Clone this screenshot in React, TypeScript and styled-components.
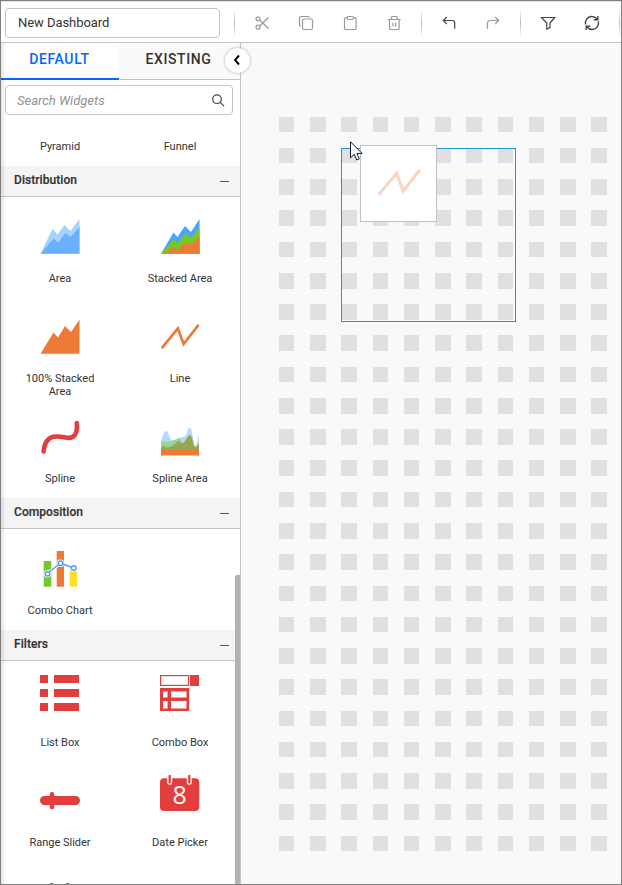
import React from "react";
import styled, { createGlobalStyle, css } from "styled-components";

const GlobalStyle = createGlobalStyle`
  *, *::before, *::after { box-sizing: border-box; }
  body { margin: 0; background: #fff; }
  input, button { font: inherit; }
`;

const Window = styled.div`
  display: flex;
  flex-direction: column;
  width: 622px;
  height: 885px;
  border: 1px solid #808080;
  background: #fff;
  color: #333;
  font-family: Roboto, "Liberation Sans", sans-serif;
  overflow: hidden;
`;

const Toolbar = styled.header`
  display: flex;
  flex: none;
  align-items: center;
  height: 42px;
  padding: 1px 0 0 4px;
  border-top: 1px solid #e4e4e4;
  border-bottom: 1px solid #c4c4c4;
`;

const NameInput = styled.input`
  width: 215px;
  height: 30px;
  margin-right: 14px;
  padding: 0 0 0 12px;
  border: 1px solid #c4c4c4;
  border-radius: 4px;
  outline: none;
  background: #fff;
  color: #333;
  font-size: 13px;
  letter-spacing: -0.05px;
`;

const Divider = styled.span`
  width: 1px;
  height: 28px;
  background: linear-gradient(#fff, #b8b8b8 50%, #fff);
`;

const ToolGroup = styled.div<{ $pad: string }>`
  display: flex;
  gap: 20px;
  padding: ${(p) => p.$pad};
`;

const ToolButton = styled.button<{ $muted?: boolean }>`
  display: flex;
  align-items: center;
  justify-content: center;
  width: 24px;
  height: 24px;
  padding: 0;
  border: 0;
  background: none;
  color: ${(p) => (p.$muted ? "#999" : "#444")};
`;

const Body = styled.div`
  display: flex;
  flex: 1;
  min-height: 0;
`;

const Sidebar = styled.aside`
  position: relative;
  display: flex;
  flex: none;
  flex-direction: column;
  width: 240px;
  border-right: 1px solid #c4c4c4;

  &::before {
    content: "";
    position: absolute;
    z-index: 1;
    inset: 0 auto 0 0;
    width: 5px;
    background: linear-gradient(90deg, rgba(0, 0, 0, 0.1), rgba(0, 0, 0, 0));
  }
`;

const Tabs = styled.div`
  display: flex;
  height: 37px;
`;

const Tab = styled.button<{ $active?: boolean }>`
  flex: none;
  width: ${(p) => (p.$active ? 118 : 121)}px;
  padding: 0 2px 5px 0;
  border: 0;
  border-bottom: 1px solid #c4c4c4;
  background: #fafafa;
  color: #333;
  font-size: 14px;
  font-weight: 500;
  letter-spacing: 0.6px;
  ${(p) =>
    p.$active &&
    css`
      padding: 0 1px 4px 0;
      border-bottom: 2px solid #0565ff;
      background: #fff;
      color: #0565ff;
    `}
`;

const CollapseButton = styled.button`
  position: absolute;
  z-index: 2;
  top: 5px;
  left: 224px;
  display: flex;
  align-items: center;
  justify-content: center;
  width: 25px;
  height: 25px;
  padding: 0 1px 1px 0;
  border: 0;
  border-radius: 50%;
  background: #fff;
  box-shadow: 0 0 3px rgba(0, 0, 0, 0.32);
`;

const Search = styled.label`
  display: flex;
  flex: none;
  align-items: center;
  width: 228px;
  height: 30px;
  margin: 5px 0 5px 4px;
  padding: 0 7px 0 11px;
  border: 1px solid #c4c4c4;
  border-radius: 4px;
`;

const SearchInput = styled.input`
  flex: 1;
  min-width: 0;
  padding: 0;
  border: 0;
  outline: none;
  font-size: 13px;
  &::placeholder { color: #929292; font-style: italic; opacity: 1; }
`;

const WidgetList = styled.div`
  flex: 1;
  min-height: 0;
  overflow: hidden;
`;

const SectionHeader = styled.div`
  display: flex;
  align-items: center;
  justify-content: space-between;
  height: 31px;
  padding: 0 11px 1px 13px;
  border-bottom: 1px solid #c4c4c4;
  background: #f4f4f4;
  font-size: 12px;
  font-weight: 500;
`;

const SectionTitle = styled.span`
  margin-top: -2px;
  letter-spacing: 0.06px;
  -webkit-text-stroke: 0.2px #333;
`;

const Minus = styled.span`
  width: 9px;
  height: 1px;
  margin-top: 2px;
  background: #555;
`;

const WidgetGrid = styled.div<{ $scrolled?: boolean }>`
  display: grid;
  grid-template-columns: 120px 120px;
  grid-auto-rows: 100px;
  padding-bottom: 1px;
  margin-top: ${(p) => (p.$scrolled ? -55 : 0)}px;
`;

const WidgetCell = styled.div`
  display: flex;
  flex-direction: column;
  align-items: center;
  padding-top: 20px;
  padding-right: 2px;
`;

const WidgetIcon = styled.svg`
  display: block;
  flex: none;
  width: 40px;
  height: 40px;
  overflow: visible;
`;

const WidgetLabel = styled.span`
  width: 80px;
  margin-top: 15px;
  font-size: 11px;
  line-height: 13px;
  text-align: center;
`;

const ScrollThumb = styled.div`
  position: absolute;
  z-index: 2;
  top: 532px;
  right: -1px;
  bottom: 0;
  width: 6px;
  border-right: 1px solid #c4c4c4;
  border-radius: 2px 0 0 0;
  background: #b2b2b2;
`;

const Canvas = styled.main`
  position: relative;
  flex: 1;
  min-width: 0;
  background: #f9f9f9;
`;

const TileGrid = styled.div`
  display: grid;
  grid-template-columns: repeat(11, 15.625px);
  grid-auto-rows: 15.625px;
  column-gap: 15.635px;
  row-gap: 15.645px;
  padding: 73.55px 0 0 37.86px;
`;

const Tile = styled.span`
  background: #e0e0e0;
`;

const DropArea = styled.div`
  position: absolute;
  top: 105px;
  left: 100px;
  width: 175px;
  height: 174px;
  border: 1px solid #1c9ad0;
`;

const DragCard = styled.div`
  position: absolute;
  top: 102px;
  left: 119px;
  display: flex;
  align-items: center;
  justify-content: center;
  width: 77px;
  height: 77px;
  padding-bottom: 2px;
  border: 1px solid #c2c2c2;
  background: #fff;
`;

const DragIcon = styled.svg`
  width: 46px;
  height: 46px;
  opacity: 0.3;
`;

const Cursor = styled.svg`
  position: absolute;
  top: 98px;
  left: 109px;
  width: 13px;
  height: 20px;
`;

const ToolSvg = ({ children }: { children: React.ReactNode }) => (
  <svg width="16" height="16" viewBox="0 0 16 16" fill="none" stroke="currentColor" strokeWidth="1.2">
    {children}
  </svg>
);

const linePath = "M2.3 30.3 17.9 11.5 23.6 27 38 8.7";

const icons: Record<string, React.ReactNode> = {
  Area: (
    <>
      <path d="M.5 36.700 12.500 12l5 5.500 7-9.500 6 6 9-12v34.700Z" fill="#a6d2ff" />
      <path d="M.5 36.700 13.500 21.500l4.500 4 7.500-9.500 5 4 9-10v26.700Z" fill="#69b1ff" />
    </>
  ),
  "Stacked Area": (
    <>
      <path d="M1 36.700 13.500 15.500l4 4.500L25 9l6 6 8.500-13v34.700Z" fill="#4aa3ff" />
      <path d="M1 36.700 14 21.500l4 4.500 7-9.500 6 3.500 8.500-9.500v26.200Z" fill="#75c926" />
      <path d="m5 36.700 8-7.200 4.500 4L25 25l5 3 9.500-8.500v17.200Z" fill="#ed7b37" />
    </>
  ),
  "100% Stacked Area": <path d="M.5 36.700 13.500 15.500l4.500 5L25 9l6 6 8.500-12.500v34.200Z" fill="#ed7b37" />,
  Line: <path d={linePath} fill="none" stroke="#ed7b37" strokeWidth="2.7" strokeLinecap="round" />,
  Spline: (
    <path
      d="M3.600 34.500C4.500 24.500 8.500 19.500 16.500 19.500S24 20.900 28.800 20.900 37.800 17.500 36.800 6"
      fill="none"
      stroke="#e23e3e"
      strokeWidth="4.600"
      strokeLinecap="round"
    />
  ),
  "Spline Area": (
    <>
      <path d="M1 26C2.500 18 4 14 6.300 14S10 24 13 24s6-4 9-4 3.500-1 5-4.500S27.500 11 29.500 11 32 15 33 21s1.500 10 3 7 2-7 3-11v16H1Z" fill="#b5d9ff" />
      <path d="M1 24c5 2 11 0 18.500-3 1.500 2 3 5 4.500 5s4.500-8 6-8 3 7 4 11 3-1 5-3v8H1Z" fill="#9bd58c" />
      <path d="M1 31c2-3 4-2 5-1s6 0 9-3 4-4 5-2 3 2 5-1 3.500-6 5-6 3 6 4 10 3 1 5-1v7H1Z" fill="#96a655" />
      <path d="M1 33h38v5.600H1Z" fill="#ed7b37" />
    </>
  ),
  "Combo Chart": (
    <>
      <path d="M3.700 12h7.600v25.700H3.700Z" fill="#75c926" />
      <path d="M16.700 2h7.300v35.700h-7.300Z" fill="#ed7b37" />
      <path d="M29.700 19h7.300v18.700h-7.300Z" fill="#ffdc30" />
      <path d="M7.500 24.500 20.500 14 33.700 19" fill="none" stroke="#fff" strokeWidth="3" />
      {[[7.5, 24.7], [20.5, 14.3], [33.7, 19]].map(([x, y]) => (
        <circle key={x} cx={x} cy={y} r="3.8" fill="#fff" />
      ))}
      <path d="M7.500 24.500 20.500 14 33.700 19" fill="none" stroke="#4e9dff" strokeWidth="1.500" />
      {[[7.5, 24.7], [20.5, 14.3], [33.7, 19]].map(([x, y]) => (
        <circle key={x} cx={x} cy={y} r="2.3" fill="#fff" stroke="#4e9dff" strokeWidth="1.500" />
      ))}
    </>
  ),
  "List Box": (
    <path d="M0 -6h8v8H0Zm14 0h25v8H14ZM0 8h8v8H0Zm14 0h25v8H14ZM0 22h8v8H0Zm14 0h25v8H14Z" fill="#e23e3e" />
  ),
  "Combo Box": (
    <>
      <rect x=".6" y="-5.400" width="28" height="9.800" fill="#fff" stroke="#e23e3e" strokeWidth="1.200" />
      <path d="M30 -6h9v11h-9Z" fill="#e23e3e" />
      <path
        d="M0 7h29.200V30H0Z M3 10.500v6h4.500v-6Zm8 0v6h15.500v-6ZM3 20v7.500h4.500V20Zm8 0v7.500h15.500V20Z"
        fill="#e23e3e"
        fillRule="evenodd"
      />
    </>
  ),
  "Range Slider": (
    <>
      <rect x="0" y="15" width="40" height="9" rx="4.500" fill="#e23e3e" />
      <rect x="9.800" y="11" width="4.400" height="17.200" rx="2.200" fill="#e23e3e" />
    </>
  ),
  "Date Picker": (
    <>
      <rect x="0" y="-2.700" width="39.200" height="32.700" rx="4" fill="#e23e3e" />
      <path d="M9.700-5v6.200M29.300-5v6.200" stroke="#fff" strokeWidth="5" strokeLinecap="round" />
      <path d="M9.700-5v6.500M29.300-5v6.500" stroke="#e23e3e" strokeWidth="2.300" strokeLinecap="round" />
      <text x="19.700" y="23" fill="#fff" fontSize="25" fontFamily="Open Sans" fontWeight="500" textAnchor="middle">8</text>
    </>
  ),
  Partial: <path d="M10 2h3v3h-3Zm16 0h3v3h-3Z" fill="#e23e3e" />,
};

const Widget = ({ name, label = name }: { name: string; label?: string }) => (
  <WidgetCell>
    <WidgetIcon viewBox="0 0 40 40">{icons[name]}</WidgetIcon>
    <WidgetLabel>{label}</WidgetLabel>
  </WidgetCell>
);

const sections = [
  { title: "Distribution", widgets: ["Area", "Stacked Area", "100% Stacked Area", "Line", "Spline", "Spline Area"] },
  { title: "Composition", widgets: ["Combo Chart"] },
  { title: "Filters", widgets: ["List Box", "Combo Box", "Range Slider", "Date Picker"] },
];

export default function App() {
  return (
    <>
      <GlobalStyle />
      <Window>
        <Toolbar>
          <NameInput defaultValue="New Dashboard" aria-label="Dashboard name" />
          <Divider />
          <ToolGroup $pad="0 15px 0 15px">
            <ToolButton $muted aria-label="Cut">
              <ToolSvg>
                <circle cx="4" cy="3.800" r="2" />
                <circle cx="4" cy="12.200" r="2" />
                <path d="m5.600 5 9 8.500M5.600 11l9-8.500" />
              </ToolSvg>
            </ToolButton>
            <ToolButton $muted aria-label="Copy">
              <ToolSvg>
                <rect x="4.500" y="4" width="10" height="10.500" rx="1.500" />
                <path d="M2.800 11.500A1.500 1.500 0 0 1 1.500 10V3A1.500 1.500 0 0 1 3 1.500h7A1.500 1.500 0 0 1 11.500 2.700" />
              </ToolSvg>
            </ToolButton>
            <ToolButton $muted aria-label="Paste">
              <ToolSvg>
                <path d="M5.500 2.700H3.800a1.300 1.300 0 0 0-1.300 1.300v9.200a1.300 1.300 0 0 0 1.300 1.300h9a1.300 1.300 0 0 0 1.300-1.300V4a1.300 1.300 0 0 0-1.300-1.300H11" />
                <rect x="5.300" y="1.500" width="6" height="3" rx="1" />
              </ToolSvg>
            </ToolButton>
            <ToolButton $muted aria-label="Delete">
              <ToolSvg>
                <path d="M1.800 4.500h13M3.500 4.500v8.700a1.300 1.300 0 0 0 1.300 1.300h7a1.300 1.300 0 0 0 1.300-1.300V4.500M5.500 4.300V2.500a1 1 0 0 1 1-1h3.600a1 1 0 0 1 1 1v1.800M7 7.500v4M9.700 7.500v4" />
              </ToolSvg>
            </ToolButton>
          </ToolGroup>
          <Divider />
          <ToolGroup $pad="0 15px 0 15px">
            <ToolButton aria-label="Undo">
              <ToolSvg>
                <path d="M5.800 2 2.300 5.500 5.800 9M2.500 5.500h8.700a2.500 2.500 0 0 1 2.500 2.500v5.800" />
              </ToolSvg>
            </ToolButton>
            <ToolButton $muted aria-label="Redo">
              <ToolSvg>
                <path d="m10.200 2 3.500 3.500L10.200 9M13.500 5.500H5A2.500 2.500 0 0 0 2.500 8v5.800" />
              </ToolSvg>
            </ToolButton>
          </ToolGroup>
          <Divider />
          <ToolGroup $pad="0 15px 0 15px">
            <ToolButton aria-label="Filter">
              <ToolSvg>
                <path d="M1.500 2.500h13.200L10 8v4.500l-3.300 1.500V8Z" />
              </ToolSvg>
            </ToolButton>
            <ToolButton aria-label="Refresh">
              <ToolSvg>
                <path
                  d="M1.600 9.500C.8 5.500 3.200 1.800 7.500 1.500c2.500-.1 4.300.9 5.500 2.500M14.400 6.500c.8 4-1.600 7.700-5.900 8C6 14.600 4.200 13.600 3 12M13.800 1v3.800h-4M2.200 15v-3.800h4"
                  strokeWidth="1.400"
                />
              </ToolSvg>
            </ToolButton>
          </ToolGroup>
          <Divider />
        </Toolbar>
        <Body>
          <Sidebar>
            <Tabs>
              <Tab $active>DEFAULT</Tab>
              <Tab>EXISTING</Tab>
            </Tabs>
            <CollapseButton aria-label="Collapse panel">
              <svg width="8" height="12" viewBox="0 0 8 12" fill="none" stroke="#000" strokeWidth="1.900">
                <path d="M6 1.500 2 6l4 4.500" />
              </svg>
            </CollapseButton>
            <Search>
              <SearchInput placeholder="Search Widgets" />
              <svg width="14" height="14" viewBox="0 0 14 14" fill="none" stroke="#444" strokeWidth="1.200">
                <circle cx="6" cy="6.200" r="4.300" />
                <path d="m9.200 9.400 3.800 3.800" />
              </svg>
            </Search>
            <WidgetList>
              <WidgetGrid $scrolled>
                <Widget name="Pyramid" />
                <Widget name="Funnel" />
              </WidgetGrid>
              {sections.map(({ title, widgets }) => (
                <React.Fragment key={title}>
                  <SectionHeader>
                    <SectionTitle>{title}</SectionTitle>
                    <Minus />
                  </SectionHeader>
                  <WidgetGrid>
                    {widgets.map((name) => (
                      <Widget key={name} name={name} />
                    ))}
                    {title === "Filters" && <Widget name="Partial" label="" />}
                  </WidgetGrid>
                </React.Fragment>
              ))}
            </WidgetList>
            <ScrollThumb />
          </Sidebar>
          <Canvas>
            <TileGrid>
              {Array.from({ length: 264 }, (_, i) => (
                <Tile key={i} />
              ))}
            </TileGrid>
            <DropArea />
            <DragCard>
              <DragIcon viewBox="0 0 40 40">
                <path d={linePath} fill="none" stroke="#ed7b37" strokeWidth="2.700" />
              </DragIcon>
            </DragCard>
            <Cursor viewBox="0 0 13 20">
              <path d="M.5.800v16l3.700-3.500 2.500 5.700 2.600-1.100-2.400-5.500h5.200Z" fill="#fff" stroke="#16162a" />
            </Cursor>
          </Canvas>
        </Body>
      </Window>
    </>
  );
}
